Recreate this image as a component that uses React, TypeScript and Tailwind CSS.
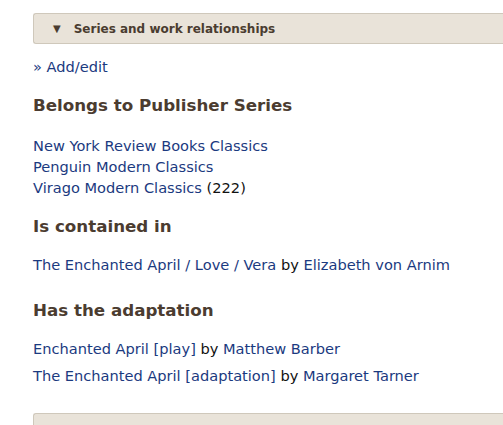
import React from "react";

const link = "text-[#1b3a80]";
const heading = "text-[16.7px] font-bold leading-[24px] text-[#4b3c30]";

export default function App() {
  return (
    <div className="w-[503px] h-[425px] overflow-hidden bg-white" style={{ fontFamily: '"DejaVu Sans", Verdana, sans-serif' }}>
      <div className="pl-[33px] pt-[13px]">
        <div className="h-[31px] rounded-l-[3px] border border-r-0 border-[#cfc8bb] bg-[#e9e3d9] flex items-center pl-[19px]">
          <span className="text-[10px] text-[#4a3c30] mr-[13px]">▼</span>
          <span className="text-[12px] font-bold text-[#4a3c30]">Series and work relationships</span>
        </div>
        <div className="mt-[12px] text-[14.6px] leading-[21px]">
          <span className={link}>» Add/edit</span>
        </div>
        <h2 className={`mt-[16px] ${heading}`}>Belongs to Publisher Series</h2>
        <div className="mt-[18px] text-[14.6px] leading-[21px] text-[#111]">
          <div className={link}>New York Review Books Classics</div>
          <div className={link}>Penguin Modern Classics</div>
          <div><span className={link}>Virago Modern Classics</span> (222)</div>
        </div>
        <h2 className={`mt-[16px] ${heading}`}>Is contained in</h2>
        <div className="mt-[16px] text-[14.6px] leading-[21px] text-[#111]">
          <span className={link}>The Enchanted April / Love / Vera</span> by <span className={link}>Elizabeth von Arnim</span>
        </div>
        <h2 className={`mt-[23px] ${heading}`}>Has the adaptation</h2>
        <div className="mt-[13px] text-[14.6px] leading-[27px] text-[#111]">
          <div><span className={link}>Enchanted April [play]</span> by <span className={link}>Matthew Barber</span></div>
          <div><span className={link}>The Enchanted April [adaptation]</span> by <span className={link}>Margaret Tarner</span></div>
        </div>
        <div className="mt-[24px] h-[31px] rounded-l-[3px] border border-r-0 border-[#cfc8bb] bg-[#e9e3d9]" />
      </div>
    </div>
  );
}
